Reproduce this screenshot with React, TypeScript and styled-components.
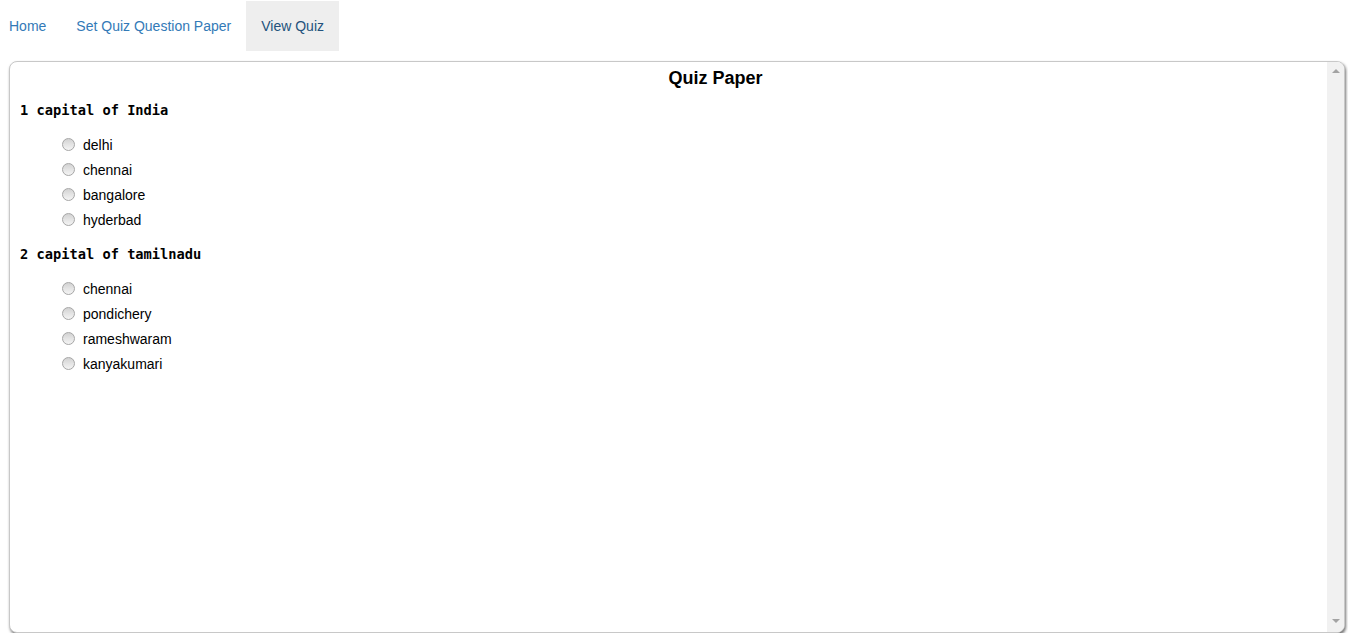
import React from "react";
import styled, { createGlobalStyle } from "styled-components";

const GlobalStyle = createGlobalStyle`
  html, body { margin: 0; padding: 0; background: #fff; }
  body {
    font-family: "Liberation Sans", Arial, Helvetica, sans-serif;
    font-size: 14px;
    line-height: 20px;
    color: #333;
  }
`;

const Nav = styled.ul`
  display: flex;
  list-style: none;
  margin: 1px 0 0 -6px;
  padding: 0;
`;

const NavLink = styled.a<{ $active?: boolean }>`
  display: block;
  padding: 15px 15px;
  line-height: 20px;
  color: ${(p) => (p.$active ? "#23527c" : "#337ab7")};
  background: ${(p) => (p.$active ? "#eeeeee" : "transparent")};
  text-decoration: none;
  cursor: pointer;
`;

const Panel = styled.div`
  display: flex;
  margin: 10px 0 0 9px;
  width: 1336px;
  height: 572px;
  box-sizing: border-box;
  border: 1px solid #c8c8c8;
  border-radius: 8px;
  box-shadow: 1px 2px 3px rgba(0, 0, 0, 0.55);
  overflow: hidden;
  background: #fff;
`;

const Content = styled.div`
  flex: 1;
  padding: 0 10px;
  color: #000;
`;

const Title = styled.h3`
  margin: 5px 0 0 94px;
  font-size: 18px;
  line-height: 22px;
  font-weight: bold;
  text-align: center;
`;

const Block = styled.div`
  margin-top: 13px;
  &:first-of-type { margin-top: 12px; }
`;

const Question = styled.div`
  font-family: "DejaVu Sans Mono", "Liberation Mono", monospace;
  font-weight: bold;
  font-size: 13.7px;
  line-height: 18px;
  white-space: pre;
`;

const Options = styled.ul`
  list-style: none;
  margin: 13px 0 0;
  padding: 0 0 0 42px;
`;

const Option = styled.li`
  display: flex;
  align-items: center;
  height: 25px;
  font-size: 14px;
`;

const Radio = styled.input`
  appearance: none;
  -webkit-appearance: none;
  box-sizing: border-box;
  width: 13px;
  height: 13px;
  margin: 0 8px 0 0;
  border-radius: 50%;
  border: 1px solid #a6a6a6;
  background: linear-gradient(180deg, #d2d2d2 0%, #e4e4e4 50%, #f4f4f4 100%);
`;

const ScrollTrack = styled.div`
  width: 17px;
  background: #f1f1f1;
  display: flex;
  flex-direction: column;
  justify-content: space-between;
  align-items: center;
  padding: 7px 0 9px;
  box-sizing: border-box;
`;

const Arrow = styled.div<{ $down?: boolean }>`
  width: 0;
  height: 0;
  border-left: 4px solid transparent;
  border-right: 4px solid transparent;
  ${(p) =>
    p.$down
      ? "border-top: 4px solid #a3a3a3;"
      : "border-bottom: 4px solid #a3a3a3;"}
`;

const quiz = [
  { q: "1 capital of India", opts: ["delhi", "chennai", "bangalore", "hyderbad"] },
  { q: "2 capital of tamilnadu", opts: ["chennai", "pondichery", "rameshwaram", "kanyakumari"] },
];

export default function App() {
  return (
    <>
      <GlobalStyle />
      <Nav>
        <li><NavLink>Home</NavLink></li>
        <li><NavLink>Set Quiz Question Paper</NavLink></li>
        <li><NavLink $active>View Quiz</NavLink></li>
      </Nav>
      <Panel>
        <Content>
          <Title>Quiz Paper</Title>
          {quiz.map((item, i) => (
            <Block key={i}>
              <Question>{item.q}</Question>
              <Options>
                {item.opts.map((o) => (
                  <Option key={o}>
                    <Radio type="radio" name={`q${i}`} />
                    {o}
                  </Option>
                ))}
              </Options>
            </Block>
          ))}
        </Content>
        <ScrollTrack>
          <Arrow />
          <Arrow $down />
        </ScrollTrack>
      </Panel>
    </>
  );
}
